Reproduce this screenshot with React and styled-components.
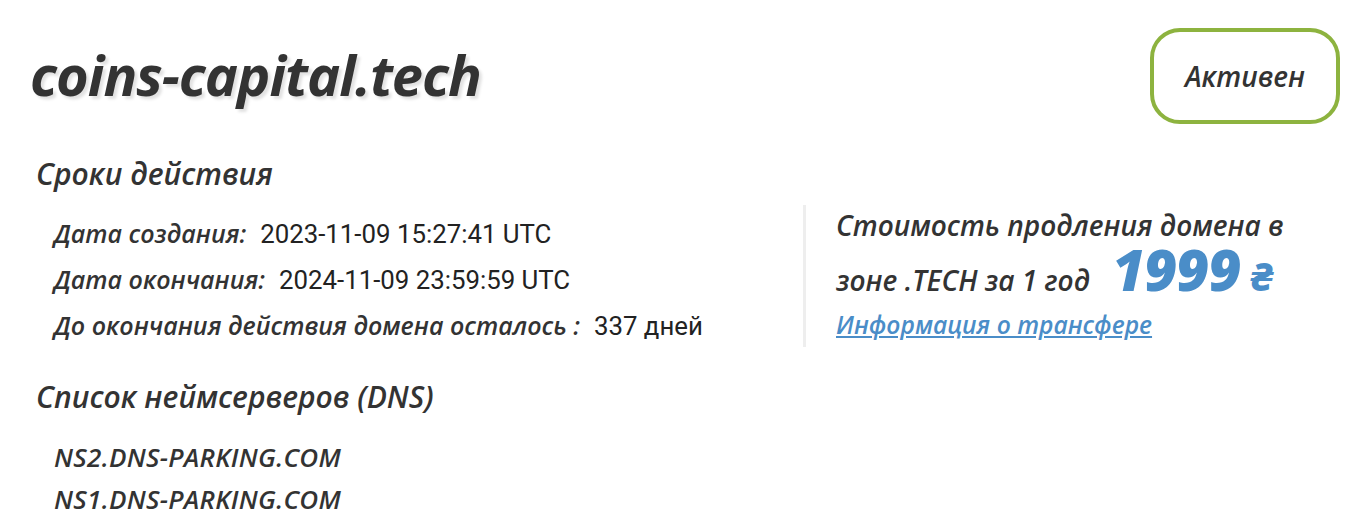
import React from 'react'
import styled, { createGlobalStyle } from 'styled-components'

const Global = createGlobalStyle`
  body {
    margin: 0;
    background: #fff;
    font-family: "Open Sans", "Noto Sans", sans-serif;
    color: #333;
  }
  * { box-sizing: border-box; }
`

const Page = styled.div`
  padding: 28px 28px 0 30px;
`

const Header = styled.header`
  display: flex;
  justify-content: space-between;
  align-items: flex-start;
`

const Domain = styled.h1`
  margin: 16px 0 0 0;
  font-size: 56px;
  line-height: 60px;
  font-weight: 700;
  font-style: italic;
  letter-spacing: -1px;
  color: #333;
  text-shadow: 3px 3px 3px #e2e2e2;
`

const Status = styled.div`
  width: 190px;
  height: 96px;
  border: 4px solid #8db33f;
  border-radius: 30px;
  display: flex;
  align-items: center;
  justify-content: center;
  font-size: 28px;
  font-weight: 600;
  font-style: italic;
  color: #333;
`

const Heading = styled.h2`
  margin: ${p => p.$top}px 0 0 6px;
  font-size: 30px;
  line-height: 36px;
  font-weight: 600;
  font-style: italic;
  color: #333;
`

const Columns = styled.div`
  display: flex;
  align-items: flex-start;
  margin-top: 25px;
`

const Terms = styled.div`
  width: 773px;
  padding-left: 24px;
  display: flex;
  flex-direction: column;
  gap: 14px;
`

const Row = styled.div`
  display: flex;
  align-items: baseline;
  height: 32px;
  line-height: 32px;
  white-space: nowrap;
`

const Label = styled.span`
  font-size: 25px;
  font-weight: 600;
  font-style: italic;
  margin-right: 14px;
`

const Value = styled.span`
  font-family: Roboto, "Liberation Sans", sans-serif;
  font-size: 25.8px;
  color: #222;
`

const Price = styled.div`
  height: 142px;
  margin: -12px 0 -6px;
  border-left: 3px solid #eeeeee;
  padding-left: 30px;
`

const PriceText = styled.div`
  margin-top: -7px;
  font-size: 28px;
  line-height: 55px;
  font-weight: 600;
  font-style: italic;
  color: #333;
  width: 490px;
`

const Amount = styled.span`
  font-size: 57px;
  line-height: 0;
  font-weight: 800;
  letter-spacing: -1px;
  color: #4a8dc8;
  margin-left: 22px;
`

const Currency = styled.span`
  font-size: 40px;
  line-height: 0;
  font-weight: 800;
  color: #4a8dc8;
  margin-left: 10px;
`

const Link = styled.a`
  display: block;
  margin-top: 2px;
  font-size: 24.6px;
  line-height: 30px;
  font-weight: 600;
  font-style: italic;
  color: #4a8dc8;
  text-decoration: underline;
`

const NsList = styled.div`
  padding-left: 24px;
  margin-top: 26px;
  display: flex;
  flex-direction: column;
  gap: 10px;
`

const Ns = styled.div`
  font-size: 26px;
  line-height: 32px;
  font-weight: 600;
  font-style: italic;
  letter-spacing: 0.3px;
`

export default function App() {
  return (
    <>
      <Global />
      <Page>
        <Header>
          <Domain>coins-capital.tech</Domain>
          <Status>Активен</Status>
        </Header>
        <Heading $top={32}>Сроки действия</Heading>
        <Columns>
          <Terms>
            <Row><Label>Дата создания:</Label><Value>2023-11-09 15:27:41 UTC</Value></Row>
            <Row><Label>Дата окончания:</Label><Value>2024-11-09 23:59:59 UTC</Value></Row>
            <Row><Label>До окончания действия домена осталось :</Label><Value>337 дней</Value></Row>
          </Terms>
          <Price>
            <PriceText>
              Стоимость продления домена в зоне .TECH за 1 год
              <Amount>1999</Amount><Currency>₴</Currency>
            </PriceText>
            <Link href="#">Информация о трансфере</Link>
          </Price>
        </Columns>
        <Heading $top={38}>Список неймсерверов (DNS)</Heading>
        <NsList>
          <Ns>NS2.DNS-PARKING.COM</Ns>
          <Ns>NS1.DNS-PARKING.COM</Ns>
        </NsList>
      </Page>
    </>
  )
}
